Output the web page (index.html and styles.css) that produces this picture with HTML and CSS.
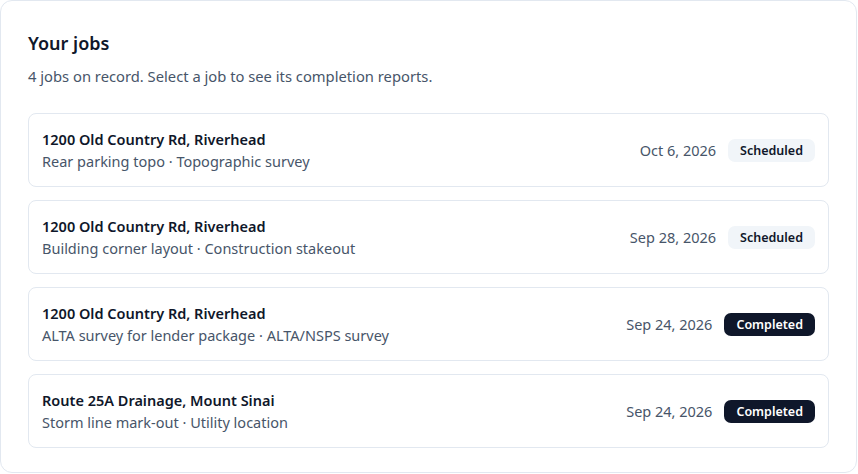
FILE: index.html
```html
<!DOCTYPE html>
<html lang="en">
<head>
    <meta charset="UTF-8">
    <meta name="viewport" content="width=device-width, initial-scale=1.0">
    <title>Your jobs</title>
    <link rel="stylesheet" href="styles.css">
</head>
<body>
    <div class="card">
        <h2 class="card-title">Your jobs</h2>
        <p class="card-sub">4 jobs on record. Select a job to see its completion reports.</p>
        <div class="job-list">
            <div class="job">
                <div class="job-info">
                    <div class="job-name">1200 Old Country Rd, Riverhead</div>
                    <div class="job-desc">Rear parking topo · Topographic survey</div>
                </div>
                <div class="job-meta">
                    <span class="job-date">Oct 6, 2026</span>
                    <span class="badge scheduled">Scheduled</span>
                </div>
            </div>
            <div class="job">
                <div class="job-info">
                    <div class="job-name">1200 Old Country Rd, Riverhead</div>
                    <div class="job-desc">Building corner layout · Construction stakeout</div>
                </div>
                <div class="job-meta">
                    <span class="job-date">Sep 28, 2026</span>
                    <span class="badge scheduled">Scheduled</span>
                </div>
            </div>
            <div class="job">
                <div class="job-info">
                    <div class="job-name">1200 Old Country Rd, Riverhead</div>
                    <div class="job-desc">ALTA survey for lender package · ALTA/NSPS survey</div>
                </div>
                <div class="job-meta">
                    <span class="job-date">Sep 24, 2026</span>
                    <span class="badge completed">Completed</span>
                </div>
            </div>
            <div class="job">
                <div class="job-info">
                    <div class="job-name">Route 25A Drainage, Mount Sinai</div>
                    <div class="job-desc">Storm line mark-out · Utility location</div>
                </div>
                <div class="job-meta">
                    <span class="job-date">Sep 24, 2026</span>
                    <span class="badge completed">Completed</span>
                </div>
            </div>
        </div>
    </div>
</body>
</html>
```

FILE: styles.css
```css
* { margin: 0; padding: 0; box-sizing: border-box; }
body { background: #ffffff; font-family: "Noto Sans", "Open Sans", sans-serif; color: #0f172a; }
.card { width: 857px; height: 473px; border: 1px solid #e2e8f0; border-radius: 12px; padding: 28px 27px 25px 27px; background: #fff; }
.card-title { font-size: 18px; font-weight: 600; line-height: 28px; color: #0f172a; }
.card-sub { margin-top: 9px; font-size: 14.75px; line-height: 20px; color: #475569; }
.job-list { margin-top: 27px; display: flex; flex-direction: column; gap: 13px; }
.job { height: 74px; border: 1px solid #e2e8f0; border-radius: 8px; padding: 0 13px; display: flex; justify-content: space-between; align-items: center; }
.job-name { font-size: 14.5px; font-weight: 600; line-height: 22px; color: #0f172a; }
.job-desc { font-size: 14.5px; line-height: 22px; color: #475569; }
.job-meta { display: flex; align-items: center; gap: 12px; }
.job-date { font-size: 14.5px; color: #475569; }
.badge { font-size: 12.5px; font-weight: 600; line-height: 23px; padding: 0 12px; border-radius: 7px; }
.scheduled { background: #f1f5f9; color: #0f172a; }
.completed { background: #0f172a; color: #ffffff; }
```
